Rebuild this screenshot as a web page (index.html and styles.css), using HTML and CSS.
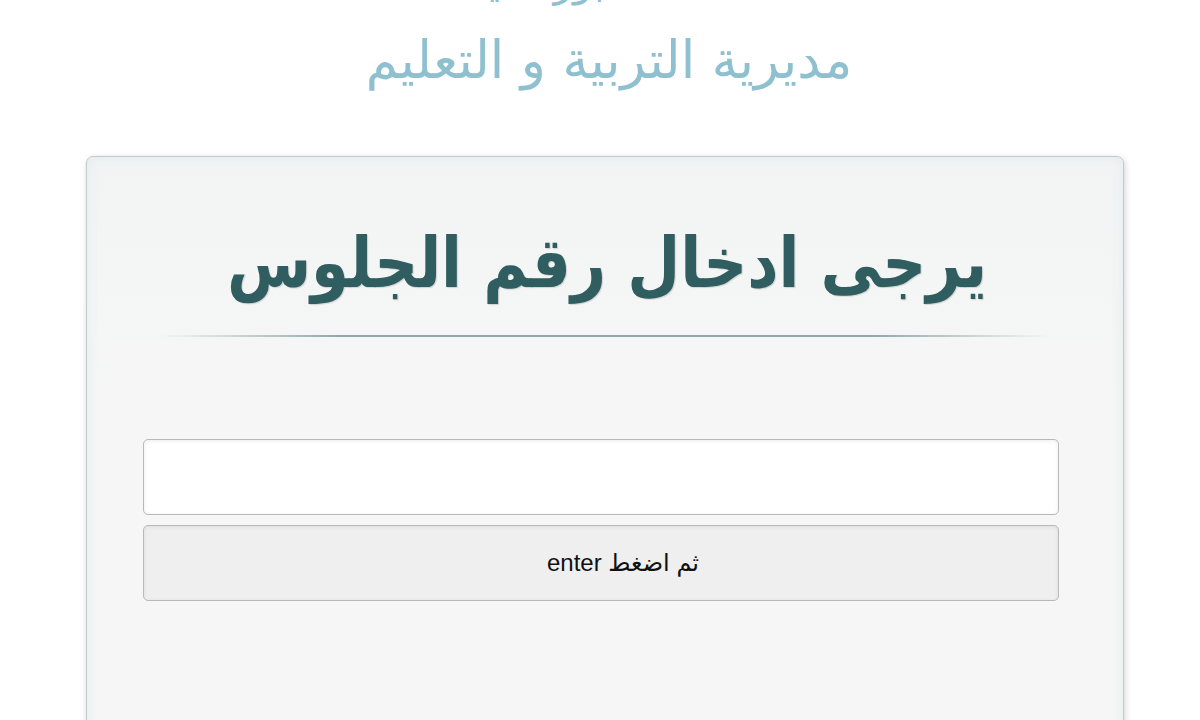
FILE: index.html
```html
<!DOCTYPE html>
<html lang="ar" dir="rtl">
<head>
  <meta charset="UTF-8" />
  <meta name="viewport" content="width=device-width, initial-scale=1.0" />
  <title>نتيجة الشهادة الاعدادية</title>
  <link rel="stylesheet" href="styles.css">
</head>
<body>
  <!-- Header -->
  <div class="header">
    <div class="gov">محافظة بورسعيد</div>
    <div class="dept">مديرية التربية و التعليم</div>
  </div>

  <!-- Search box -->
  <div class="frame">
    <h1>يرجى ادخال رقم الجلوس</h1>
    <div class="divider"></div>
    <form class="search" onsubmit="return false;">
      <input type="text" id="seatNumber" />
      <button type="submit">ثم اضغط enter</button>
    </form>
  </div>
</body>
</html>
```

FILE: styles.css
```css
body {
  margin: 0;
  background-color: #ffffff;
  font-family: "DejaVu Sans", sans-serif;
  overflow: hidden;
}

.header {
  text-align: center;
  color: #8fc0cf;
  margin-top: -42px;
  padding-left: 18px;
}

.gov {
  font-size: 40px;
  line-height: 48px;
}

.dept {
  font-size: 52px;
  line-height: 64px;
  margin-top: 22px;
}

.frame {
  margin: 64px 76px 0 86px;
  height: 700px;
  background: linear-gradient(to bottom, #f2f4f4, #f6f6f6 30%);
  border: 1px solid #c4c9c9;
  border-radius: 7px;
  box-shadow: 1px 2px 6px rgba(0, 0, 0, 0.18), inset 0 0 12px rgba(210, 230, 235, 0.6);
  padding: 56px 64px 0 56px;
}

h1 {
  margin: 0;
  text-align: center;
  font-size: 61px;
  line-height: 100px;
  font-weight: bold;
  color: #2f5d60;
  text-shadow: 1px 1px 1px rgba(0, 0, 0, 0.15);
  padding-left: 12px;
  transform: scaleY(1.15);
}

.divider {
  height: 2px;
  margin: 22px 10px 0 18px;
  background: linear-gradient(to right, rgba(200, 200, 200, 0), #8fa9a7 20%, #8fa9a7 80%, rgba(200, 200, 200, 0));
}

.search {
  margin-top: 102px;
  display: flex;
  flex-direction: column;
  gap: 10px;
}

.search input,
.search button {
  height: 76px;
  box-sizing: border-box;
  border: 1px solid #b9b9b9;
  border-radius: 5px;
  box-shadow: inset 0 1px 4px rgba(0, 0, 0, 0.08);
  font-family: "Liberation Sans", "DejaVu Sans", sans-serif;
}

.search input {
  background-color: #ffffff;
  font-size: 20px;
  padding: 0 12px;
}

.search button {
  background-color: #efefef;
  font-size: 24px;
  color: #111;
  padding-left: 50px;
  cursor: pointer;
}
```
